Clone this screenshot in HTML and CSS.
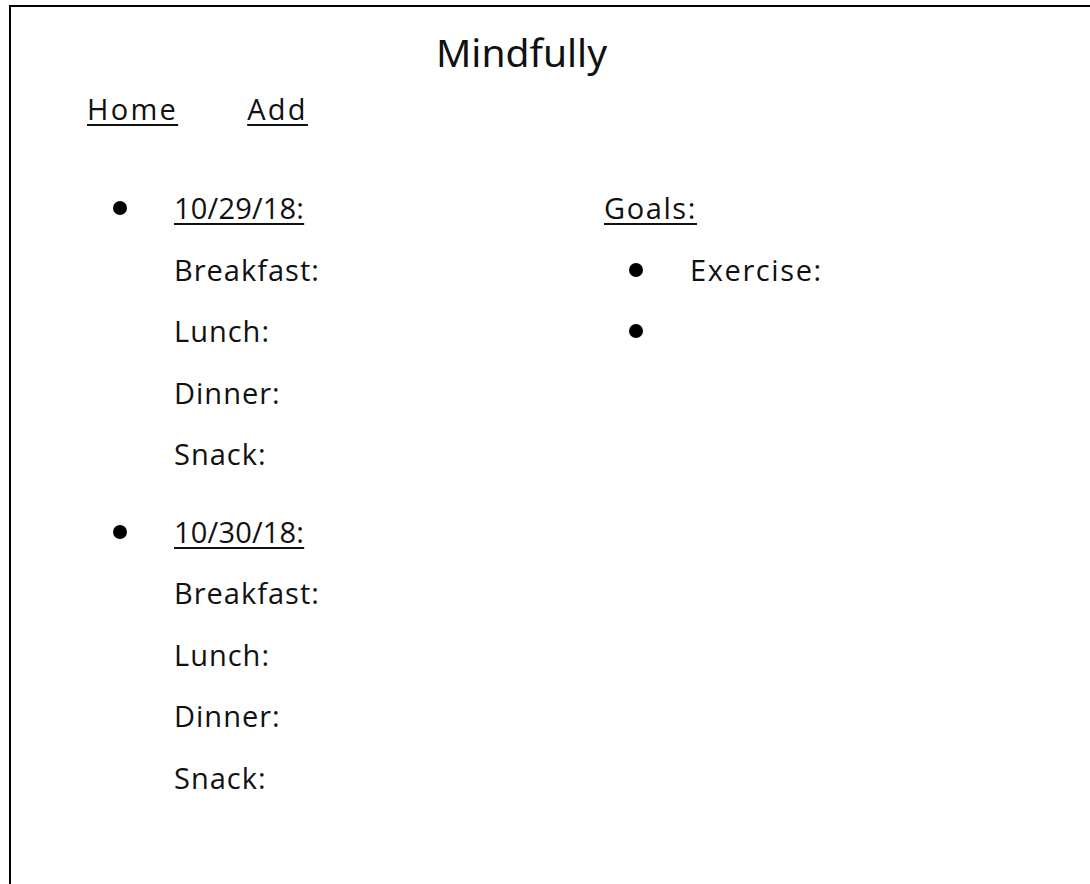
FILE: index.html
```html
<!DOCTYPE html>
<html>
<head>
<meta charset="utf-8">
<link rel="stylesheet" href="styles.css">
<title>Mindfully</title>
</head>
<body>
<div class="frame">
  <h1 class="title">Mindfully</h1>
  <nav class="nav">
    <a href="#">Home</a>
    <a href="#">Add</a>
  </nav>
  <div class="columns">
    <ul class="days">
      <li class="day">
        <a href="#" class="date">10/29/18:</a>
        <div class="meal">Breakfast:</div>
        <div class="meal">Lunch:</div>
        <div class="meal">Dinner:</div>
        <div class="meal">Snack:</div>
      </li>
      <li class="day">
        <a href="#" class="date">10/30/18:</a>
        <div class="meal">Breakfast:</div>
        <div class="meal">Lunch:</div>
        <div class="meal">Dinner:</div>
        <div class="meal">Snack:</div>
      </li>
    </ul>
    <div class="goals">
      <a href="#" class="goals-title">Goals:</a>
      <ul class="goal-list">
        <li>Exercise:</li>
        <li></li>
      </ul>
    </div>
  </div>
</div>
</body>
</html>
```

FILE: styles.css
```css
html, body {
  margin: 0;
  padding: 0;
  background: #ffffff;
}
body {
  font-family: "Open Sans", "Noto Sans", sans-serif;
  color: #111;
}
.frame {
  margin: 5px 0 0 9px;
  border-top: 2px solid #000;
  border-left: 2px solid #000;
  height: 880px;
  box-sizing: border-box;
}
.title {
  margin: 0;
  padding-top: 20px;
  padding-left: 425px;
  font-family: "Noto Sans", sans-serif;
  font-weight: 400;
  font-size: 39px;
  line-height: 50px;
  letter-spacing: 0;
}
.nav {
  display: flex;
  gap: 69px;
  padding-left: 76px;
  margin-top: 14px;
  font-size: 29px;
  letter-spacing: 2.3px;
  line-height: 36px;
}
a {
  color: #111;
  text-decoration: underline;
  text-decoration-thickness: 2px;
  text-underline-offset: 4px;
}
.columns {
  display: flex;
  margin-top: 50px;
  font-size: 29px;
  letter-spacing: 1px;
}
.days {
  list-style: none;
  margin: 0;
  padding: 0 0 0 163px;
  width: 430px;
}
.day {
  position: relative;
  margin-bottom: 16px;
}
.day::before {
  content: "";
  position: absolute;
  left: -61px;
  top: 24px;
  width: 14px;
  height: 14px;
  border-radius: 50%;
  background: #000;
}
.date, .meal, .goals-title, .goal-list li {
  display: block;
  line-height: 61.5px;
  height: 61.5px;
}
.date {
  letter-spacing: 0.2px;
}
.goals {
  letter-spacing: 1.6px;
}
.goal-list {
  list-style: none;
  margin: 0;
  padding: 0 0 0 86px;
}
.goal-list li {
  position: relative;
}
.goal-list li::before {
  content: "";
  position: absolute;
  left: -61px;
  top: 24px;
  width: 14px;
  height: 14px;
  border-radius: 50%;
  background: #000;
}
.goals-title {
  display: inline-block;
}
```
